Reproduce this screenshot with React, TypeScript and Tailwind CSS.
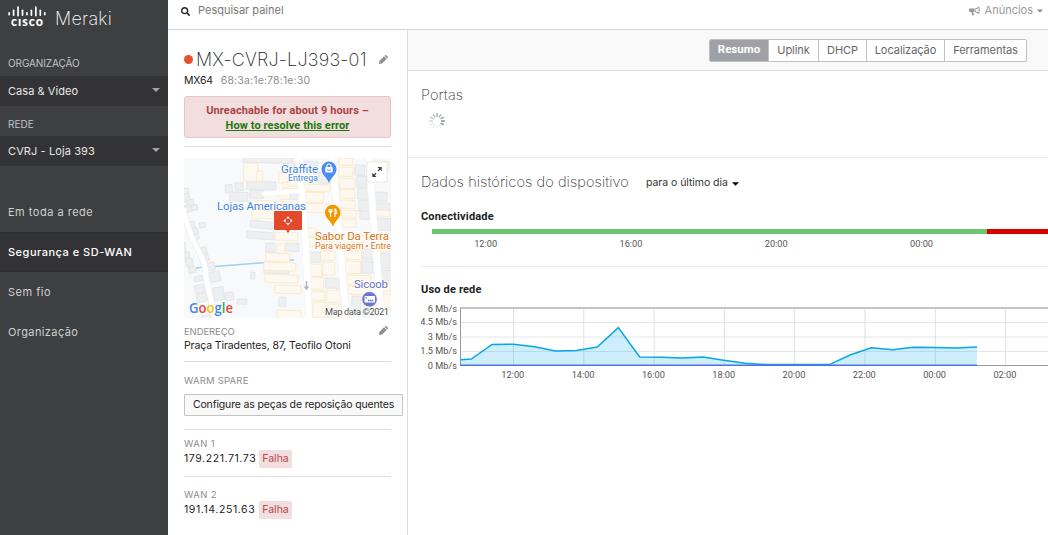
import React from 'react';
import { FaSearch } from 'react-icons/fa';

const roboto = "font-['Roboto','Liberation_Sans',sans-serif]";

function Caret({ className }: { className: string }) {
  return (
    <svg width="8" height="4" viewBox="0 0 8 4" className={className}>
      <path d="M0 0h8L4 4z" fill="currentColor" />
    </svg>
  );
}

function Pencil() {
  return (
    <svg width="9" height="9" viewBox="0 0 9 9" className="mr-[3px] shrink-0 text-[#8f8f8f]">
      <path d="M0 9l.4-3L5 1.200l2.700 2.700L3 8.600zM5.500.8l.7-.6q.6-.4 1.200 0l1.300 1.300q.5.6 0 1.200l-.6.7z" fill="currentColor" />
    </svg>
  );
}

function Megaphone() {
  return (
    <svg width="11" height="10" viewBox="0 0 11 10" fill="currentColor" className="shrink-0">
      <path d="M.8 2.500h4.700v3.400H4.300q-.3 1 .3 1.600.1.800.7 1.300-.6.800-2 .5-.9-1.500-.7-3.400H.8Q0 5.800 0 5V3.300q0-.8.8-.8z" />
      <path fillRule="evenodd" d="M5.800 2.500Q8 2.300 9.800.4q.6.100.6.600v2.200q.6.300.6 1t-.6 1v2.200q0 .5-.6.600Q8 6.100 5.800 5.900zM6.500 3.200v2.100q1.700.2 3.100 1.300V1.900Q8.200 3 6.500 3.200z" />
    </svg>
  );
}

function CiscoLogo() {
  const bars = [
    [0, 6, 3.5], [4.45, 3.500, 6.500], [8.9, 0.200, 10.300], [13.35, 3.500, 6.500], [17.8, 6, 3.500],
    [22.25, 3.500, 6.500], [26.7, 0.200, 10.300], [31.15, 3.500, 6.500], [35.6, 6, 3.500],
  ];
  return (
    <svg width="39" height="22" viewBox="0 0 39 22" className="shrink-0">
      {bars.map(([x, y, h]) => (
        <rect key={x} x={x + 0.3} y={y} width="1.700" height={h} rx="0.800" fill="#fff" />
      ))}
      <text x="3" y="20" textLength="32" fontFamily="Lato, sans-serif" fontWeight="900" fontSize="12.5" fill="#fff">
        cısco
      </text>
    </svg>
  );
}

function Sidebar() {
  return (
    <aside className="flex w-[168px] shrink-0 flex-col bg-[#3e3f41] text-[11px] text-[#e8e8e8]">
      <div className="flex h-[50px] items-start gap-2 pt-[6px] pl-[8px]">
        <CiscoLogo />
        <span className="mt-[1px] text-[18px] leading-6 font-extralight tracking-[0.25px] text-white">Meraki</span>
      </div>
      <div className="flex h-[26px] items-center px-2 text-[10px] tracking-[-0.1px] text-[#c4c4c4]">ORGANIZAÇÃO</div>
      <div className="flex h-[30px] items-center justify-between bg-[#333335] px-2">
        <span className="mt-px tracking-[0.050px]">Casa &amp; Video</span>
        <Caret className="-mt-[2px] text-[#a5a5a5]" />
      </div>
      <div className="flex h-[30px] items-center px-2 pt-[7px] text-[10px] text-[#c4c4c4]">REDE</div>
      <div className="flex h-[30px] items-center justify-between bg-[#333335] px-2">
        <span className="mt-px tracking-[0.1px]">CVRJ - Loja 393</span>
        <Caret className="-mt-[2px] text-[#a5a5a5]" />
      </div>
      <nav className="mt-[26px] flex flex-col tracking-[0.5px] text-[#cfcfcf]">
        <a className="flex h-10 items-center px-2 pt-px">Em toda a rede</a>
        <a className="flex h-10 items-center border-y border-[#2f2f31] bg-[#333335] px-2 pt-px font-medium text-white">Segurança e SD-WAN</a>
        <a className="flex h-10 items-center px-2 pt-px">Sem fio</a>
        <a className="flex h-10 items-center px-2 pt-px tracking-[0.400px]">Organização</a>
      </nav>
    </aside>
  );
}

type Block = [number, number, number, number, number?];

function Blocks({ items, fill, stroke }: { items: Block[]; fill: string; stroke: string }) {
  return (
    <g fill={fill} stroke={stroke} strokeWidth="0.900">
      {items.map(([x, y, w, h, r = 2]) => (
        <rect key={x + '-' + y} x={x} y={y} width={w} height={h} transform={`rotate(${r} ${x} ${y})`} />
      ))}
    </g>
  );
}

function StreetMap() {
  const grey: Block[] = [
    [59, -2, 50, 6], [41, 27, 7, 8, -3], [51, 25, 8, 8, -3], [46, 34, 18, 9], [63, 23, 29, 8], [66, 32, 14, 8],
    [67, 62, 22, 7, 6], [63, 73, 27, 7, 4], [82, 85, 9, 9], [67, 114, 4, 7], [53, 141, 10, 5], [41, 135, 8, 8, -8],
    [95, 139, 7, 9], [29, 130, 10, 13, -8], [80, 111, 25, 4], [102, 85, 13, 8], [105, 33, 10, 8], [120, 3, 14, 9],
    [171, 7, 10, 10], [173, 18, 10, 11], [174, 30, 11, 11], [175, 42, 11, 11], [176, 53, 10, 8], [135, 14, 12, 11],
    [125, 94, 12, 10], [179, 91, 11, 10], [178, 103, 11, 12], [191, 34, 12, 9], [192, 45, 14, 10], [191, 60, 16, 12],
    [194, 95, 12, 15], [196, 112, 12, 10], [168, 138, 9, 14], [142, 120, 14, 10], [104, 4, 7, 9],
    [-2, 30, 7, 6, 6], [-3, 37, 8, 7, -10], [2, 43, 7, 6, -15], [0, 48, 6, 7, -15], [7, 48, 6, 5, -15],
    [15, 65, 6, 5, -8], [4, 64, 6, 6, -10], [5, 72, 8, 6, -20], [8, 77, 6, 6, -20], [13, 91, 9, 7, -15],
    [18, 98, 6, 6, -15], [19, 106, 11, 8, -12], [25, 115, 10, 10, -15], [-4, 85, 5, 12, -8], [-2, 95, 7, 6, -8],
    [1, 102, 7, 7, -15], [4, 110, 7, 6, -15], [10, 119, 8, 5, -10], [10, 128, 10, 8, -12], [12, 137, 10, 8, -12], [18, 158, 9, 8, -12],
  ];
  const cream: Block[] = [
    [60, 5, 14, 18], [73, 13, 6, 10], [95, 14, 18, 11], [99, 24, 15, 6], [65, 42, 34, 7], [68, 52, 25, 8],
    [96, 33, 10, 8], [91, 74, 23, 8], [93, 86, 8, 9], [82, 95, 24, 8], [80, 104, 32, 8], [81, 116, 33, 8],
    [91, 127, 26, 8], [93, 152, 24, 12], [118, 15, 15, 9], [119, 26, 27, 7], [119, 34, 21, 10], [120, 45, 24, 9],
    [122, 70, 10, 8], [124, 79, 12, 9], [137, 83, 12, 9], [137, 93, 14, 9], [139, 104, 12, 13], [125, 106, 13, 12],
    [126, 119, 14, 12], [127, 133, 14, 9], [129, 144, 13, 15], [143, 132, 14, 12], [144, 146, 14, 14],
    [155, 0, 14, 7], [155, 9, 14, 9], [156, 20, 15, 10], [156, 31, 15, 9], [157, 42, 14, 8], [158, 52, 15, 7],
    [158, 61, 14, 8], [159, 92, 19, 9], [161, 103, 16, 12], [163, 117, 24, 9], [164, 128, 24, 8], [180, 139, 12, 10],
    [188, 3, 17, 9], [191, 52, 15, 6], [191, 86, 14, 7], [197, 124, 10, 9], [199, 136, 10, 13],
    [164, 77, 17, 7], [104, 20, 10, 8], [105, 44, 10, 9],
  ];
  const streets = 'M115 -2L122 92L125 162M148 -2L155 72L162 162M185 -2L190 70L198 162';
  return (
    <svg width="207" height="160" viewBox="0 0 207 160" fontFamily="Roboto, sans-serif" className="block">
      <rect width="207" height="160" fill="#f8f9fb" />
      <path d="M31 108.500L82 104.500M102 102h8M12 110l8-1" stroke="#9fd0f5" strokeWidth="1.500" />
      <Blocks items={grey} fill="#eeeff1" stroke="#e2e4e6" />
      <Blocks items={cream} fill="#fef9f0" stroke="#fae9c8" />
      <path d="M78 36L116 33" stroke="#fff" strokeWidth="4" />
      <path d="M-1 50Q5 76 14 92T22 120L32 164" fill="none" stroke="#eaecef" strokeWidth="6.500" />
      <path d="M-1 50Q5 76 14 92T22 120L32 164" fill="none" stroke="#fff" strokeWidth="5" />
      <path d={streets} fill="none" stroke="#f0f1f3" strokeWidth="7.500" />
      <path d={streets} fill="none" stroke="#fff" strokeWidth="6.500" />
      <path d="M122.500 123v8m-2-2.500l2 2.500l2-2.500" fill="none" stroke="#b0b4cc" strokeWidth="1.500" />

      <g stroke="#fff" strokeWidth="1.500" paintOrder="stroke" strokeLinejoin="round">
        <g fill="#3f82e0">
          <text x="97" y="14.500" fontSize="11.500" textLength="37">Graffite</text>
          <text x="104" y="23" fontSize="9" textLength="30">Entrega</text>
          <text x="33" y="52.300" fontSize="11.500" textLength="89">Lojas Americanas</text>
        </g>
        <g fill="#d97412">
          <text x="131" y="82" fontSize="11.500" textLength="74">Sabor Da Terra</text>
          <text x="131" y="90.500" fontSize="9" textLength="76">Para viagem • Entre</text>
        </g>
        <text x="170" y="129.800" fontSize="11.500" textLength="34" fill="#6670c0">Sicoob</text>
        <text x="141" y="156.700" fontSize="9.300" textLength="64" fill="#4c4c4c">Map data ©2021</text>
      </g>

      <path d="M145 25C143 19 137.500 17 137.500 11a7.500 7.500 0 0 1 15 0C152.500 17 147 19 145 25z" fill="#4b8df0" />
      <rect x="141.300" y="9" width="7.400" height="5.500" rx="0.800" fill="#fff" />
      <path d="M143 9V8a2 2 0 0 1 4 0v1" fill="none" stroke="#fff" strokeWidth="1.100" />
      <path d="M143.500 11a1.500 1.500 0 0 0 3 0" fill="none" stroke="#4b8df0" strokeWidth="0.800" />
      <path d="M149 69C147 62 141 61 141 54.500a7.700 7.700 0 0 1 15.500 0C156.500 61 151 62 149 69z" fill="#f29900" />
      <path d="M146.500 51v8M145 51v2.500q1.500 1.500 3 0V51M151 59v-8q1.700 1 1.500 4.500H151" fill="none" stroke="#fff" strokeWidth="1.100" />
      <circle cx="185.500" cy="141.300" r="7.800" fill="#6b77c8" stroke="#fff" strokeWidth="0.800" />
      <rect x="180.500" y="138" width="10.500" height="6.500" rx="0.700" fill="#fff" />
      <path d="M181.500 139.800h1.500M184 142.500h5.500" stroke="#6572c5" strokeWidth="1.300" strokeDasharray="1.500 0.400" />

      <path d="M90 53.500h28.500v20.500H108l-4 5l-4-5H90z" fill="#fff" />
      <path d="M91 53h26a1 1 0 0 1 1 1v17a1 1 0 0 1-1 1h-11l-2 3.500l-2-3.500H91a1 1 0 0 1-1-1V54a1 1 0 0 1 1-1z" fill="#e5492b" />
      <path d="M104 58.200l2 2.300h-4zM104 67.400l2-2.300h-4zM99.400 62.800l2.300-2v4zM108.600 62.800l-2.300-2v4z" fill="#fff" />

      <rect x="183" y="4" width="20" height="20" rx="2" fill="#fff" stroke="#e2e2e2" strokeWidth="0.700" />
      <path d="M189 18.300l3-3M194 13l2.600-2.600" fill="none" stroke="#444" strokeWidth="1.300" />
      <path d="M193.400 9h4.300v4.300zM188.300 14.700v4.300h4.300z" fill="#444" />

      <text x="5" y="155" fontSize="14" textLength="44" lengthAdjust="spacingAndGlyphs" fontWeight="600" stroke="#fff" strokeWidth="1.500" paintOrder="stroke" fontFamily="Open Sans, sans-serif">
        <tspan fill="#4285f4">G</tspan><tspan fill="#ea4335">o</tspan><tspan fill="#fbbc05">o</tspan><tspan fill="#4285f4">g</tspan><tspan fill="#34a853">l</tspan><tspan fill="#ea4335">e</tspan>
      </text>
    </svg>
  );
}

function Wan({ name, ip }: { name: string; ip: string }) {
  return (
    <div className="pt-[7px]">
      <div className="text-[9.5px] leading-[14px] tracking-[0.4px] text-[#8d8d8d]">{name}</div>
      <div className="-mt-px flex items-center">
        <span className="-mt-px w-[75px] text-[10.5px] leading-4 tracking-[0.580px]">{ip}</span>
        <span className="flex h-[18px] w-[33px] items-center justify-center rounded-[2px] bg-[#f2dede] text-[10.5px] text-[#b94a48]">Falha</span>
      </div>
    </div>
  );
}

function DevicePanel() {
  return (
    <section className="flex w-[240px] shrink-0 flex-col border-r border-[#dedede] px-4 text-[10.5px] text-[#222]">
      <div className="mt-[18px] flex h-6 items-center">
        <span className="-mt-px h-[9px] w-[9px] rounded-full bg-[#e8502f]" />
        <h1 className="ml-[3px] text-[18px] leading-6 font-extralight tracking-[0.22px] whitespace-nowrap">MX-CVRJ-LJ393-01</h1>
        <span className="-mt-px ml-auto"><Pencil /></span>
      </div>
      <div className="flex h-4 items-center gap-2 pt-px">
        <span className="tracking-[-0.200px]">MX64</span>
        <span className="tracking-[0.160px] text-[#8e8e8e]">68:3a:1e:78:1e:30</span>
      </div>
      <div className={`mt-[8px] flex h-[42px] w-[207px] flex-col items-center justify-center rounded-[3px] border border-[#e6c3c7] bg-[#f2dede] pt-[2px] text-[11px] leading-[15px] font-bold tracking-[0.100px] text-[#a94442] ${roboto}`}>
        <span>Unreachable for about 9 hours –</span>
        <a className="text-[#1c780e] underline">How to resolve this error</a>
      </div>
      <div className="mt-[8px] w-[207px] border-t border-[#dedede]" />
      <div className="mt-[11px]"><StreetMap /></div>
      <div className="mt-[6px] flex h-[14px] w-[207px] items-center justify-between text-[9.5px] text-[#8d8d8d]">
        <span className="mt-[2px] tracking-[-0.1px]">ENDEREÇO</span>
        <span className="-mt-[2px]"><Pencil /></span>
      </div>
      <div className="mt-px leading-[14px] tracking-[-0.110px] whitespace-nowrap">Praça Tiradentes, 87, Teofilo Otoni</div>
      <div className="mt-[8px] w-[207px] border-t border-[#dedede] pt-[11px] text-[9.5px] leading-4 tracking-[0.2px] text-[#8d8d8d]">WARM SPARE</div>
      <button className="mt-[5px] flex h-[22px] w-[219px] shrink-0 items-center justify-center rounded-[1px] border border-[#c4c4c4] bg-[#f9f9f9] tracking-[-0.150px] whitespace-nowrap">
        Configure as peças de reposição quentes
      </button>
      <div className="mt-[13px] h-[47px] w-[207px] border-t border-[#dedede]"><Wan name="WAN 1" ip="179.221.71.73" /></div>
      <div className="w-[207px] border-t border-[#dedede] pt-[4px]"><Wan name="WAN 2" ip="191.14.251.63" /></div>
    </section>
  );
}

function Spinner() {
  const shades = ['#a4a8b0', '#a8acb4', '#989da5', '#888d97', '#9499a2', '#ecedef', '#f4f4f5', '#eaebed', '#e0e2e5', '#d4d6da', '#c5c8cd', '#b3b7bd'];
  return (
    <svg width="16" height="16" viewBox="-8 -8 16 16">
      {shades.map((c, i) => (
        <rect key={i} x="-0.7" y="-8" width="1.4" height="4" rx="0.600" fill={c} transform={`rotate(${i * 30})`} />
      ))}
    </svg>
  );
}

function UsageChart() {
  const line = '460.5,359.7 471.3,359 492,344.5 513.3,344.2 534.7,346.8 555.3,351 576.3,350.4 597.3,347 618.3,327.6 639.7,357 661.3,357.3 682,358 703,357 723.7,360.2 745.3,363.3 766.3,364.6 829.3,364.6 850.7,354.7 871.3,347.8 892.7,349.7 913,347.2 934.7,347.4 956.3,348.1 977,347';
  const hours = ['12:00', '14:00', '16:00', '18:00', '20:00', '22:00', '00:00', '02:00'];
  return (
    <svg width="627" height="78" viewBox="421 304 627 78" className="block" fontFamily="Roboto, sans-serif" fontSize="9.200" fill="#555">
      {['6 Mb/s', '4.5 Mb/s', '3 Mb/s', '1.5 Mb/s', '0 Mb/s'].map((t, i) => (
        <text key={t} x="457" y={[312, 325, 340, 354, 369][i]} textAnchor="end">{t}</text>
      ))}
      <path d="M461 322.500H1048M461 337H1048M461 351.500H1048" stroke="#e6e6e6" />
      {hours.map((t, i) => (
        <g key={t}>
          <path d={`M${513.500 + i * 70.300} 309v57`} stroke="#e0e0e0" />
          <text x={512.800 + i * 70.300} y="378" textAnchor="middle">{t}</text>
        </g>
      ))}
      <path d="M460 308H1048" stroke="#c4c4c4" strokeWidth="2" />
      <path d="M460.500 308v58M460 365.500H1048" stroke="#999" />
      <polygon points={`460.5,365 ${line} 977,365`} fill="#05a8e5" fillOpacity="0.2" />
      <polyline points={line} fill="none" stroke="#05a8e5" strokeWidth="1.500" />
      <path d="M460 365.300H977" stroke="#5070e8" strokeWidth="1.500" />
    </svg>
  );
}

function Content() {
  const tabs: [string, string][] = [
    ['Uplink', 'w-[50px]'], ['DHCP', 'w-[48px]'], ['Localização', 'w-[78px]'], ['Ferramentas', 'w-[82px]'],
  ];
  return (
    <main className="flex min-w-0 flex-1 flex-col text-[11px] text-[#333]">
      <div className="flex h-[41px] items-center justify-end border-b border-[#dedede] bg-[#f9f9f9] pr-[21px]">
        <div className="flex h-[23px] overflow-hidden rounded-[2px] border border-[#bfbfbf] bg-white text-[#666]">
          <span className={`flex w-[58px] items-center justify-center bg-[#a0a1a6] text-[11.500px] font-bold text-white ${roboto}`}>Resumo</span>
          {tabs.map(([label, width]) => (
            <span key={label} className={`flex items-center justify-center border-l border-[#bfbfbf] tracking-[-0.050px] ${width}`}>{label}</span>
          ))}
        </div>
      </div>
      <div className="flex h-[87px] flex-col border-b border-[#ebebeb] pt-[12px] pl-[13px]">
        <h2 className="text-[14.500px] leading-6 font-extralight tracking-[0.080px]">Portas</h2>
        <div className="mt-[6px] ml-[8px]"><Spinner /></div>
      </div>
      <div className="flex flex-col pl-[13px]">
        <div className="mt-[12px] flex h-6 items-center">
          <h2 className="w-[208px] text-[14.500px] font-extralight tracking-[0.080px] whitespace-nowrap">Dados históricos do dispositivo</h2>
          <span className="mt-px ml-[17px] text-[10.5px] tracking-[-0.050px] whitespace-nowrap">para o último dia</span>
          <Caret className="ml-[4px] mt-[4px] w-[7px] text-black" />
        </div>
        <h3 className={`mt-[15px] text-[11px] leading-4 font-bold tracking-[0.170px] text-[#222] ${roboto}`}>Conectividade</h3>
        <div className="mt-[4px] ml-[11px] flex h-[5px]">
          <span className="w-[555px] bg-[#6cc66c]" />
          <span className="flex-1 bg-[#dd0000]" />
        </div>
        <div className="mt-[3px] ml-[-8px] flex">
          {['12:00', '16:00', '20:00', '00:00'].map((t) => (
            <span key={t} className={`w-[145.3px] shrink-0 text-center text-[9.200px] leading-[14px] text-[#555] ${roboto}`}>{t}</span>
          ))}
        </div>
        <div className="mt-[15px] border-t border-[#ebebeb]" />
        <h3 className={`mt-[15px] text-[11px] leading-4 font-bold tracking-[0.170px] text-[#222] ${roboto}`}>Uso de rede</h3>
        <div className="mt-[6px]"><UsageChart /></div>
      </div>
    </main>
  );
}

export default function App() {
  return (
    <div className="flex h-[535px] w-[1048px] overflow-hidden bg-white font-['Inter','Liberation_Sans',sans-serif]">
      <Sidebar />
      <div className="flex min-w-0 flex-1 flex-col">
        <header className="flex h-[30px] shrink-0 items-center border-b border-[#d2d2d2] px-[13px] pr-[5px] pb-[8px] text-[11px]">
          <FaSearch className="mt-[2px] text-[9px] text-[#222]" />
          <span className="ml-[8px] text-[#777]">Pesquisar painel</span>
          <span className="ml-auto flex items-center text-[#999]">
            <Megaphone />
            <span className="ml-[5px]">Anúncios</span>
            <Caret className="ml-[4px] w-[6px] text-[#888]" />
          </span>
        </header>
        <div className="flex min-h-0 flex-1">
          <DevicePanel />
          <Content />
        </div>
      </div>
    </div>
  );
}
